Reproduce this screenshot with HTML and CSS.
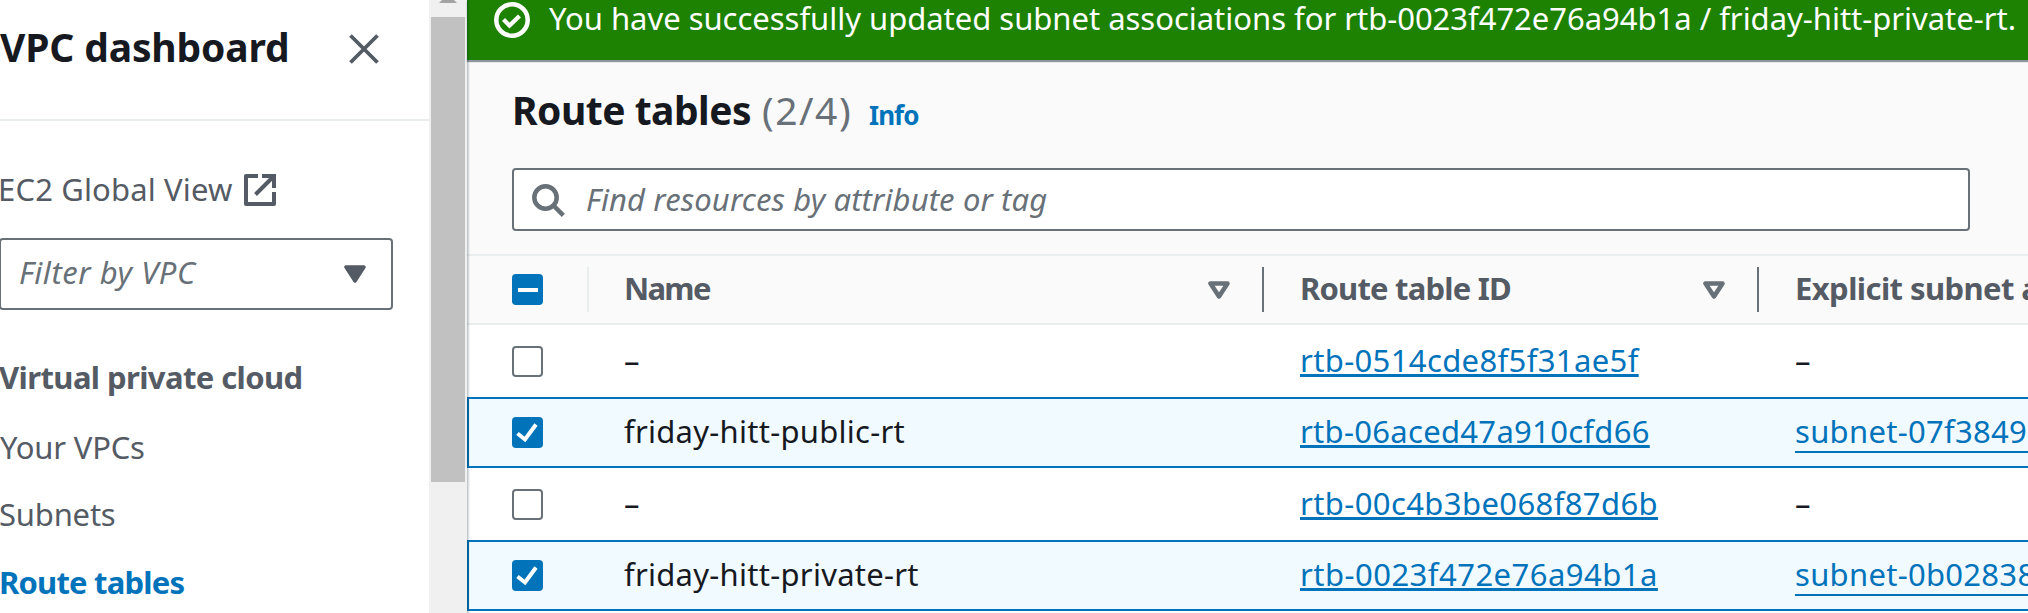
FILE: index.html
```
<!DOCTYPE html>
<html lang="en">
<head>
<meta charset="utf-8">
<title>Route tables | VPC Console</title>
<link rel="stylesheet" href="styles.css">
</head>
<body>
<div class="app">
  <aside class="sidebar">
    <nav class="nav">
      <header class="nav-header">
        <h2 class="nav-title">VPC dashboard</h2>
        <svg class="close" viewBox="0 0 30 30"><path d="M1.500 1.500l27 27M28.500 1.500l-27 27" fill="none" stroke="#545b64" stroke-width="3.800"/></svg>
      </header>
      <a class="nav-link global-view">EC2 Global View
        <svg class="external" viewBox="0 0 32 32"><g fill="none" stroke="#545b64" stroke-width="4"><path d="M14 2H2v28h28V18" stroke-linejoin="round"/><path d="M18 2h12v12M30 2L11.500 20.500"/></g></svg>
      </a>
      <div class="filter"><span class="filter-text">Filter by VPC</span>
        <svg class="caret" viewBox="0 0 22 18"><path d="M2 2h18L11 16z" fill="#545b64" stroke="#545b64" stroke-width="3.500" stroke-linejoin="round"/></svg>
      </div>
      <h3 class="nav-group">Virtual private cloud</h3>
      <a class="nav-link vpcs">Your VPCs</a>
      <a class="nav-link subnets">Subnets</a>
      <a class="nav-link active">Route tables</a>
    </nav>
    <div class="scrollbar"><svg class="scroll-arrow" viewBox="0 0 18 3"><path d="M0 3l3-3h12l3 3z" fill="#a3a3a3"/></svg><div class="thumb"></div></div>
  </aside>
  <main class="main">
    <div class="flash">
      <svg class="success" viewBox="0 0 36 36"><circle cx="18" cy="18" r="15.700" fill="none" stroke="#fff" stroke-width="4.500"/><path d="M9.500 17.500l6 6L25.500 14" fill="none" stroke="#fff" stroke-width="4.300"/></svg>
      <span class="flash-text">You have successfully updated subnet associations for rtb-0023f472e76a94b1a / friday-hitt-private-rt.</span>
    </div>
    <section class="tools">
      <div class="heading"><h1 class="title">Route tables</h1><span class="count">(2/4)</span><a class="info">Info</a></div>
      <div class="search">
        <svg class="magnifier" viewBox="0 0 33 33"><circle cx="13.500" cy="13.500" r="11.200" fill="none" stroke="#687078" stroke-width="4.500"/><path d="M21 21L31.300 31.300" stroke="#687078" stroke-width="4.500"/></svg>
        <span class="search-text">Find resources by attribute or tag</span>
      </div>
    </section>
    <div class="row head">
      <div class="cell check"><span class="box mixed"></span><i class="divider light"></i></div>
      <div class="cell name"><span class="th th-name">Name</span><svg class="sort" viewBox="0 0 22 18"><path d="M2.500 2.500h17L11 15.500z" fill="none" stroke="#687078" stroke-width="4.500" stroke-linejoin="round"/></svg><i class="divider"></i></div>
      <div class="cell id"><span class="th th-id">Route table ID</span><svg class="sort" viewBox="0 0 22 18"><path d="M2.500 2.500h17L11 15.500z" fill="none" stroke="#687078" stroke-width="4.500" stroke-linejoin="round"/></svg><i class="divider"></i></div>
      <div class="cell assoc"><span class="th th-assoc">Explicit subnet associations</span></div>
    </div>
    <div class="row tall">
      <div class="cell check"><span class="box"></span></div>
      <div class="cell name"><span class="text">–</span></div>
      <div class="cell id"><a class="link l1">rtb-0514cde8f5f31ae5f</a></div>
      <div class="cell assoc"><span class="text">–</span></div>
    </div>
    <div class="row selected">
      <div class="cell check"><span class="box on"><svg class="tick" viewBox="0 0 31 31"><path d="M5.500 16.500l7.500 6L24 7.500" fill="none" stroke="#fff" stroke-width="4"/></svg></span></div>
      <div class="cell name"><span class="text">friday-hitt-public-rt</span></div>
      <div class="cell id"><a class="link l2">rtb-06aced47a910cfd66</a></div>
      <div class="cell assoc"><a class="subnet">subnet-07f38491b6a52c0de</a></div>
    </div>
    <div class="row tall">
      <div class="cell check"><span class="box"></span></div>
      <div class="cell name"><span class="text">–</span></div>
      <div class="cell id"><a class="link l3">rtb-00c4b3be068f87d6b</a></div>
      <div class="cell assoc"><span class="text">–</span></div>
    </div>
    <div class="row selected">
      <div class="cell check"><span class="box on"><svg class="tick" viewBox="0 0 31 31"><path d="M5.500 16.500l7.500 6L24 7.500" fill="none" stroke="#fff" stroke-width="4"/></svg></span></div>
      <div class="cell name"><span class="text">friday-hitt-private-rt</span></div>
      <div class="cell id"><a class="link l4">rtb-0023f472e76a94b1a</a></div>
      <div class="cell assoc"><a class="subnet">subnet-0b028381d4c7e95fa</a></div>
    </div>
  </main>
</div>
</body>
</html>
```
FILE: styles.css
```
* { box-sizing: border-box; }
body { margin: 0; overflow: hidden; background: #fff; color: #16191f; font: 31px/40px "Noto Sans", sans-serif; white-space: nowrap; }
h1, h2, h3 { margin: 0; font-size: inherit; font-weight: 700; }
svg { display: block; flex: none; }
.app { display: flex; width: 2028px; height: 613px; overflow: hidden; }

.sidebar { display: flex; flex: none; width: 467px; height: 613px; }
.nav { display: flex; flex-direction: column; width: 429px; color: #545b64; }
.nav-header { display: flex; height: 121px; padding-top: 22px; border-bottom: 2px solid #eaeded; color: #16191f; }
.nav-title { width: 349px; font-size: 39px; line-height: 50px; letter-spacing: -0.14px; }
.close { width: 30px; height: 30px; margin-top: 12px; }
.nav-link { display: flex; height: 40px; letter-spacing: -0.2px; }
.global-view { margin-top: 48px; margin-left: -2px; letter-spacing: 0.15px; }
.external { width: 32px; height: 32px; margin: 5px 0 0 11px; }
.filter { display: flex; width: 394px; height: 72px; margin: 29px 0 0 -1px; padding: 12px 25px 0 18px; border: 2px solid #687078; border-radius: 4px; justify-content: space-between; color: #687078; font-style: italic; letter-spacing: 0.54px; }
.caret { width: 22px; height: 18px; margin-top: 13px; }
.nav-group { margin: 47px 0 0 -1px; line-height: 40px; letter-spacing: -0.6px; }
.vpcs { margin-top: 30px; }
.subnets { margin-top: 27px; margin-left: -1px; }
.active { margin-top: 28px; margin-left: -1px; color: #0073bb; font-weight: 700; letter-spacing: -0.8px; }
.scrollbar { width: 38px; padding: 0 2px; background: #f0f0f0; }
.scroll-arrow { width: 18px; height: 3px; margin-left: 8px; }
.thumb { width: 34px; height: 465px; margin-top: 14px; background: #c1c1c1; }

.main { position: relative; flex: 1; min-width: 0; background: #fff; }
.main::before { content: ""; position: absolute; z-index: 2; left: 0; top: 0; width: 3px; height: 613px; background: linear-gradient(90deg, rgba(0, 28, 36, .28), rgba(0, 28, 36, 0)); }
.flash { position: relative; display: flex; height: 60px; padding-left: 27px; background: #1d8102; color: #fff; box-shadow: 0 2px 1px #8d969c; }
.success { width: 36px; height: 36px; margin-top: 2px; }
.flash-text { margin: -2px 0 0 19px; letter-spacing: -0.02px; }
.tools { height: 194px; padding: 25px 0 0 45px; background: #fafafa; }
.heading { display: flex; align-items: baseline; height: 50px; line-height: 50px; }
.title { font-size: 39px; letter-spacing: -0.5px; }
.count { margin-left: 11px; color: #687078; font-size: 39px; letter-spacing: 1.5px; }
.info { margin-left: 17px; color: #0073bb; font-size: 26px; font-weight: 700; letter-spacing: -1px; }
.search { display: flex; width: 1458px; height: 63px; margin-top: 33px; padding: 9px 0 0 18px; border: 2px solid #687078; border-radius: 4px; background: #fff; }
.magnifier { width: 33px; height: 33px; margin-top: 5px; }
.search-text { margin-left: 21px; color: #687078; font-style: italic; letter-spacing: 0.12px; }

.row { display: grid; grid-template-columns: 122px 675px 495px 269px; height: 71px; }
.tall { height: 72px; }
.head { background: #fafafa; border: solid #eaeded; border-width: 2px 0; color: #545b64; }
.selected { background: #f1faff; box-shadow: inset 2px 2px #0073bb, inset 0 -2px #0073bb; }
.cell { display: flex; align-items: center; min-width: 0; overflow: hidden; }
.check { padding-left: 45px; }
.name { padding-left: 35px; }
.id, .assoc { padding-left: 36px; }
.box { flex: none; width: 31px; height: 31px; border: 2px solid #687078; border-radius: 4px; background: #fff; }
.on, .mixed { border: 0; background: #0073bb; }
.mixed { display: grid; place-items: center; }
.mixed::after { content: ""; width: 20px; height: 4px; background: #fff; }
.divider { flex: none; width: 2px; height: 45px; background: #687078; }
.light { margin-left: auto; background: #eaeded; }
.sort { width: 22px; height: 18px; margin: 0 32px 0 auto; }
.th { padding-bottom: 3px; font-weight: 700; }
.th-name { letter-spacing: -1.7px; }
.th-id { letter-spacing: -0.8px; }
.th-assoc { letter-spacing: -0.58px; }
.text { padding-bottom: 3px; letter-spacing: 0.27px; }
.link { padding-bottom: 3px; color: #0073bb; text-decoration: underline; text-decoration-thickness: 3px; text-underline-offset: 2px; text-decoration-skip-ink: none; letter-spacing: 0.37px; }
.l2 { letter-spacing: 0.3px; }
.l3 { letter-spacing: 0.4px; }
.l4 { letter-spacing: 0.48px; }
.subnet { height: 41px; line-height: 38px; color: #0073bb; border-bottom: 2px solid; letter-spacing: 0.29px; }
```
